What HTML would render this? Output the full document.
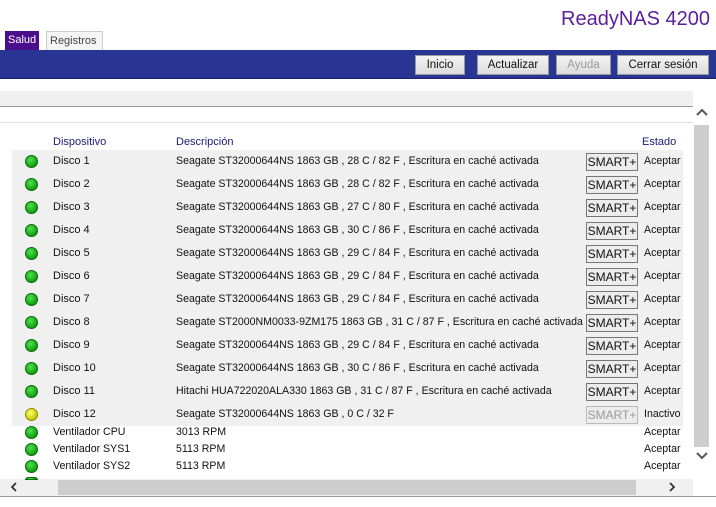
<!DOCTYPE html>
<html><head><meta charset="utf-8"><style>
*{margin:0;padding:0;box-sizing:border-box}
body{width:716px;height:507px;overflow:hidden;background:#fff;font-family:"Liberation Sans",Arial,sans-serif;position:relative;font-size:11px;color:#111}
.a{position:absolute}
.title{right:6px;top:8px;font-size:20px;color:#5b1f9b}
.tab{top:31px;height:19px;font-size:11px;line-height:19px;padding:0 3px}
.bar{left:0;top:50px;width:716px;height:29px;background:#283593;border-bottom:1px solid #1a2270}
.btn{top:55px;height:20px;background:linear-gradient(#f4f4f4,#dcdcdc);border:1px solid #999;font-size:11.5px;line-height:18px;text-align:center;color:#111}
.hd{color:#1b1b7a;font-size:11px;top:136px}
.row{left:12px;width:671px;height:23px;background:#f0f0f0}
.dot{width:13px;height:13px;border-radius:50%;background:radial-gradient(circle at 40% 35%,#4fe04f,#11a011 70%);border:1px solid #0a6a0a}
.y{background:radial-gradient(circle at 40% 35%,#ffff70,#c8c800 70%);border-color:#8a8a00}
.t{font-size:10.6px}
.sm{width:52px;height:18px;border:1px solid #777;background:#ececec;font-size:12px;line-height:16px;text-align:center}
</style></head><body>
<div class="a title">ReadyNAS 4200</div>
<div class="a tab" style="left:5px;width:34px;background:#4b0f8e;color:#fff">Salud</div>
<div class="a tab" style="left:46px;width:57px;background:#f5f5f5;border:1px solid #ccc;border-bottom:none;color:#444">Registros</div>
<div class="a bar"></div>
<div class="a btn" style="left:415px;width:50px">Inicio</div>
<div class="a btn" style="left:477px;width:72px">Actualizar</div>
<div class="a btn" style="left:556px;width:55px;color:#999">Ayuda</div>
<div class="a btn" style="left:617px;width:92px">Cerrar sesión</div>
<div class="a" style="left:0;top:91px;width:693px;height:16px;background:#f0f0f0;border-bottom:1px solid #999"></div>
<div class="a" style="left:0;top:122px;width:693px;height:1px;background:#ddd"></div>
<div class="a" style="left:694px;top:125px;width:15px;height:322px;background:#cdcdcd"></div>
<svg class="a" style="left:695px;top:107px" width="14" height="10"><path d="M2 8 L7 3 L12 8" stroke="#555" stroke-width="2" fill="none"/></svg>
<svg class="a" style="left:695px;top:451px" width="14" height="10"><path d="M2 2 L7 7 L12 2" stroke="#555" stroke-width="2" fill="none"/></svg>
<div class="a" style="left:0;top:479px;width:693px;height:17px;background:#f0f0f0"></div>
<div class="a" style="left:58px;top:480px;width:578px;height:15px;background:#cdcdcd"></div>
<svg class="a" style="left:9px;top:481px" width="10" height="12"><path d="M7 2 L3 6 L7 10" stroke="#333" stroke-width="1.8" fill="none"/></svg>
<svg class="a" style="left:667px;top:481px" width="10" height="12"><path d="M3 2 L7 6 L3 10" stroke="#333" stroke-width="1.8" fill="none"/></svg>
<div class="a" style="left:0;top:496px;width:716px;height:1px;background:#999"></div>
<div class="a hd" style="left:53px">Dispositivo</div>
<div class="a hd" style="left:176px">Descripción</div>
<div class="a hd" style="left:642px">Estado</div>
<div id="rows"></div>
<script>
var d=[["Disco 1","Seagate ST32000644NS 1863 GB , 28 C / 82 F , Escritura en caché activada"],
["Disco 2","Seagate ST32000644NS 1863 GB , 28 C / 82 F , Escritura en caché activada"],
["Disco 3","Seagate ST32000644NS 1863 GB , 27 C / 80 F , Escritura en caché activada"],
["Disco 4","Seagate ST32000644NS 1863 GB , 30 C / 86 F , Escritura en caché activada"],
["Disco 5","Seagate ST32000644NS 1863 GB , 29 C / 84 F , Escritura en caché activada"],
["Disco 6","Seagate ST32000644NS 1863 GB , 29 C / 84 F , Escritura en caché activada"],
["Disco 7","Seagate ST32000644NS 1863 GB , 29 C / 84 F , Escritura en caché activada"],
["Disco 8","Seagate ST2000NM0033-9ZM175 1863 GB , 31 C / 87 F , Escritura en caché activada"],
["Disco 9","Seagate ST32000644NS 1863 GB , 29 C / 84 F , Escritura en caché activada"],
["Disco 10","Seagate ST32000644NS 1863 GB , 30 C / 86 F , Escritura en caché activada"],
["Disco 11","Hitachi HUA722020ALA330 1863 GB , 31 C / 87 F , Escritura en caché activada"],
["Disco 12","Seagate ST32000644NS 1863 GB , 0 C / 32 F"]];
var h="";
d.forEach(function(r,i){var y=150+i*23,last=i==11;
h+='<div class="a row" style="top:'+y+'px"></div>';
h+='<div class="a dot'+(last?' y':'')+'" style="left:25px;top:'+(y+5)+'px"></div>';
h+='<div class="a t" style="left:53px;top:'+(y+5)+'px;font-size:11px">'+r[0]+'</div>';
h+='<div class="a t" style="left:176px;top:'+(y+5)+'px">'+r[1]+'</div>';
h+='<div class="a sm" style="left:586px;top:'+(y+3)+'px;'+(last?'color:#999;border-color:#bbb':'')+'">SMART+</div>';
h+='<div class="a t" style="left:644px;top:'+(y+5)+'px">'+(last?'Inactivo':'Aceptar')+'</div>';});
[["Ventilador CPU","3013 RPM"],["Ventilador SYS1","5113 RPM"],["Ventilador SYS2","5113 RPM"]].forEach(function(r,i){var y=426+i*17;
h+='<div class="a dot" style="left:25px;top:'+(y+0)+'px"></div>';
h+='<div class="a t" style="left:53px;top:'+y+'px">'+r[0]+'</div>';
h+='<div class="a t" style="left:176px;top:'+y+'px">'+r[1]+'</div>';
h+='<div class="a t" style="left:644px;top:'+y+'px">Aceptar</div>';});
h+='<div class="a dot" style="left:25px;top:477px;height:3px;border-radius:6px 6px 0 0"></div>';
document.getElementById("rows").innerHTML=h;
</script>
</body></html>
